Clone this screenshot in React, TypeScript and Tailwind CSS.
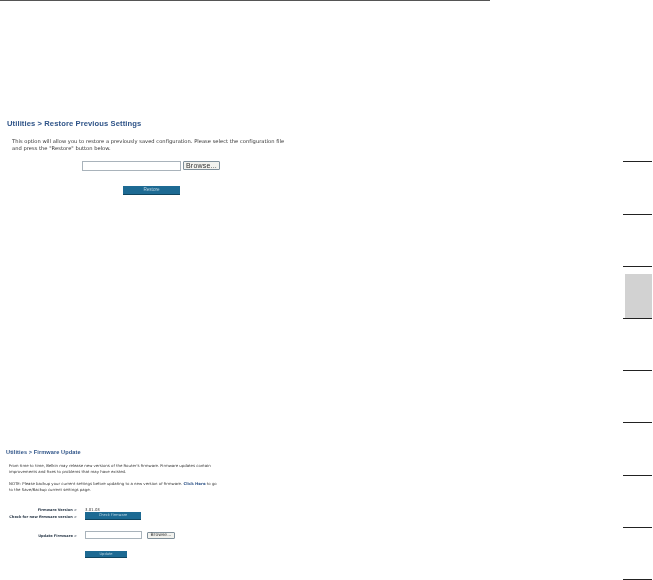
const FONT = "font-['Liberation_Sans',Arial,sans-serif]";
const BODY = "font-['DejaVu_Sans',Verdana,sans-serif]";

function TealButton({ label, className }: { label: string; className: string }) {
  return (
    <div
      className={`flex items-center justify-center pt-px leading-none bg-[#1d6a93] border-b border-[#0f4560] text-[#b9d3e0] ${className}`}
    >
      {label}
    </div>
  );
}

function FakeInput({ className }: { className: string }) {
  return <div className={`bg-white border border-[#a9b3bb] ${className}`} />;
}

function BrowseButton({ className }: { className: string }) {
  return (
    <div
      className={`flex items-center justify-center leading-none bg-[#f2f2ee] border border-[#7f8f9a] rounded-[1px] text-[#333] ${className}`}
    >
      Browse...
    </div>
  );
}

function RestorePanel() {
  return (
    <section className="ml-[7px] mt-[119px] blur-[0.5px]">
      <h2 className="text-[7.6px] leading-[10px] font-bold text-[#2f5488] tracking-[0.1px] whitespace-nowrap">
        Utilities &gt; Restore Previous Settings
      </h2>
      <p className={`ml-[5px] mt-[9px] text-[5.15px] leading-[7px] tracking-[0.03px] text-[#333] whitespace-nowrap ${BODY}`}>
        This option will allow you to restore a previously saved configuration. Please select the configuration file
        <br />
        and press the "Restore" button below.
      </p>
      <div className="ml-[75px] mt-[9px] flex items-start gap-[2px]">
        <FakeInput className="w-[99px] h-[10px]" />
        <BrowseButton className="w-[37px] h-[9px] text-[7px] tracking-[0.2px]" />
      </div>
      <TealButton label="Restore" className="ml-[116px] mt-[15px] w-[57px] h-[9px] text-[4.6px]" />
    </section>
  );
}

function FirmwarePanel() {
  return (
    <section className="ml-[6px] mt-[253px] blur-[0.5px]">
      <h2 className="text-[5.6px] leading-[8px] font-bold text-[#2f5488] tracking-[0.1px] whitespace-nowrap">
        Utilities &gt; Firmware Update
      </h2>
      <div className={`ml-[3px] mt-[7px] text-[3.88px] leading-[5.5px] text-[#333] whitespace-nowrap ${BODY}`}>
        <p>
          From time to time, Belkin may release new versions of the Router's firmware. Firmware updates contain
          <br />
          improvements and fixes to problems that may have existed.
        </p>
        <p className="mt-[7px]">
          NOTE: Please backup your current settings before updating to a new version of firmware.{" "}
          <b className="text-[#2f5488]">Click Here</b> to go
          <br />
          to the Save/Backup current settings page.
        </p>
      </div>

      <div className={`mt-[15px] grid grid-cols-[71px_auto] gap-x-[8px] text-[3.55px] text-[#333] items-center justify-start ${BODY}`}>
        <b className="pt-[1px] text-right whitespace-nowrap leading-[4px] text-[#2b3a4a]">Firmware Version &gt;</b>
        <span className="pt-[1px] leading-[4px] text-[3.9px]">3.01.03</span>
        <b className="pt-[2px] text-right whitespace-nowrap leading-[6px] text-[#2b3a4a]">Check for new firmware version &gt;</b>
        <TealButton label="Check Firmware" className="w-[56px] h-[8px] text-[3.6px]" />
        <b className="mt-[11px] pt-[1px] text-right whitespace-nowrap leading-[6px] text-[#2b3a4a]">Update Firmware &gt;</b>
        <div className="mt-[11px] flex items-center gap-[5px]">
          <FakeInput className="w-[57px] h-[8px]" />
          <BrowseButton className="w-[28px] h-[7px] text-[4.6px]" />
        </div>
        <span />
        <TealButton label="Update" className="mt-[12px] w-[42px] h-[7px] text-[3.6px]" />
      </div>
    </section>
  );
}

// right margin: 9 chapter rules, third tab is the current one
function ChapterTabs() {
  const gaps = ["h-[52px]", "h-[51px]", "h-[51px]", "h-[51px]", "h-[51px]", "h-[52px]", "h-[51px]", "h-[51px]"];
  return (
    <aside className="w-[29px] pt-[160px]">
      <div className="h-px bg-[#222]" />
      {gaps.map((gap, i) => (
        <div key={i}>
          {i === 2 ? (
            <div className={`${gap} pt-[7px] pl-[2px]`}>
              <div className="h-[44px] bg-[#d2d2d2]" />
            </div>
          ) : (
            <div className={gap} />
          )}
          <div className="h-px bg-[#222]" />
        </div>
      ))}
    </aside>
  );
}

export default function App() {
  return (
    <div className={`w-[653px] h-[580px] overflow-hidden bg-white flex flex-col ${FONT}`}>
      <div className="w-[490px] h-px bg-[#555] shrink-0" />
      <div className="flex">
        <main className="w-[623px] -mt-px">
          <RestorePanel />
          <FirmwarePanel />
        </main>
        <ChapterTabs />
      </div>
    </div>
  );
}
